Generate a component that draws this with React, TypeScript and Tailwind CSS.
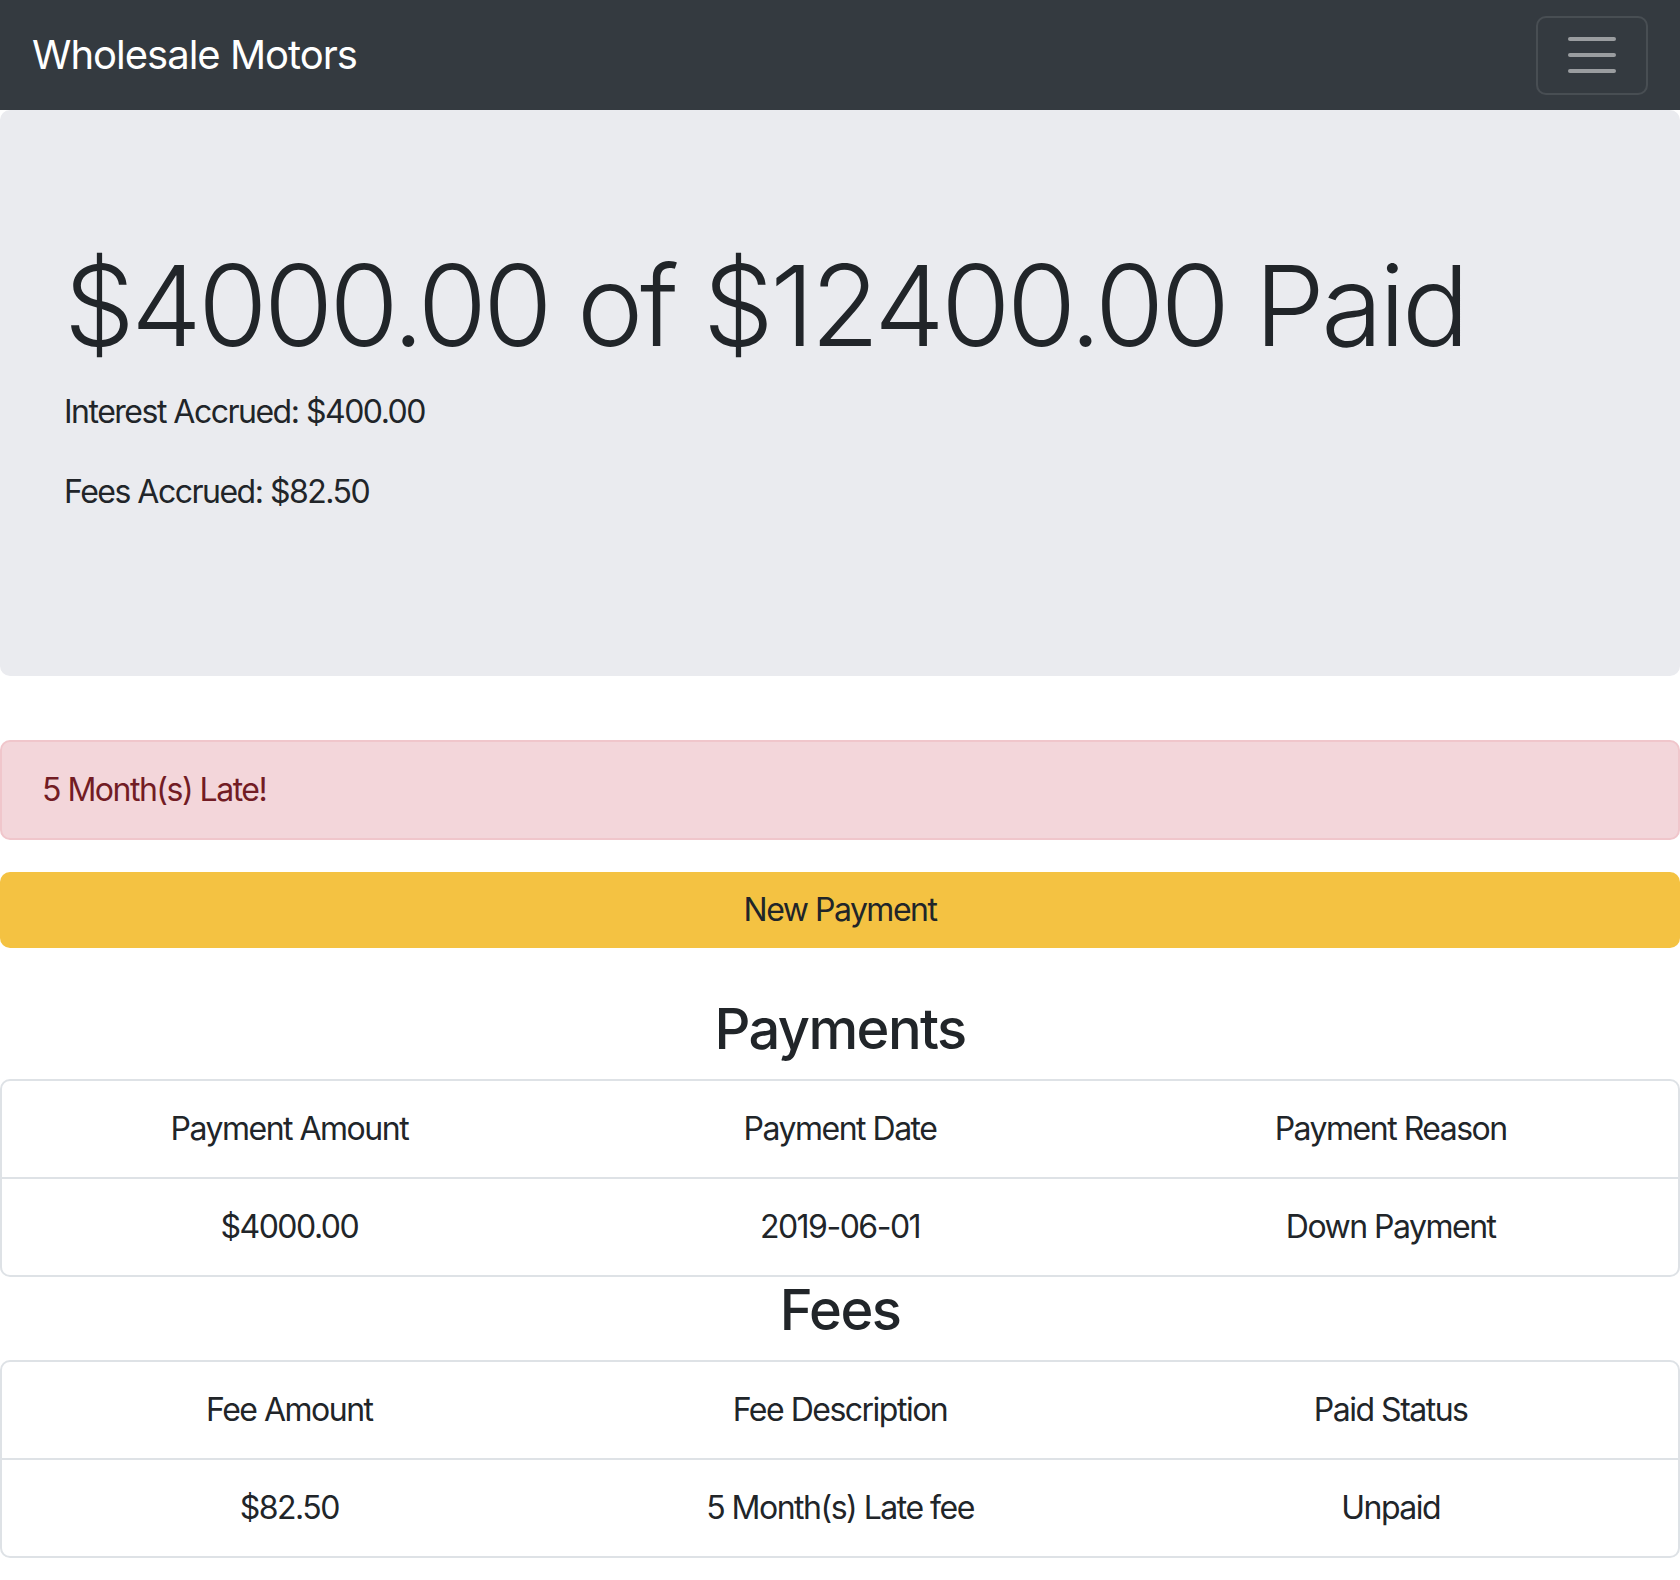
import React from "react";

function Table({ head, row }: { head: string[]; row: string[] }) {
  return (
    <div className="border-2 border-[#dee2e6] rounded-[10px] overflow-hidden">
      <div className="grid grid-cols-[576fr_528fr_576fr] border-b-2 border-[#dee2e6]">
        {head.map((h) => (
          <div key={h} className="py-6 text-center text-[32px] leading-[48px] tracking-[-1.5px]">
            {h}
          </div>
        ))}
      </div>
      <div className="grid grid-cols-[576fr_528fr_576fr]">
        {row.map((h) => (
          <div key={h} className="py-6 text-center text-[32px] leading-[48px] tracking-[-1.5px]">
            {h}
          </div>
        ))}
      </div>
    </div>
  );
}

export default function App() {
  return (
    <div className="w-[1680px] min-h-[1580px] bg-white text-[#212529] font-['Inter',sans-serif]">
      <nav className="h-[110px] bg-[#343a40] flex items-center justify-between px-8">
        <span className="text-[40px] leading-[60px] text-white tracking-[-1px]">Wholesale Motors</span>
        <button className="w-[112px] h-[79px] border-2 border-white/10 rounded-[10px] flex flex-col items-center justify-center gap-3">
          <span className="block w-12 h-1 rounded-full bg-white/50" />
          <span className="block w-12 h-1 rounded-full bg-white/50" />
          <span className="block w-12 h-1 rounded-full bg-white/50" />
        </button>
      </nav>

      <div className="bg-[#eaebef] rounded-[10px] px-16 py-32 mb-16">
        <h1 className="text-[112px] font-light leading-[1.2] mb-4 tracking-[-3.5px]">
          $4000.00 of $12400.00 Paid
        </h1>
        <p className="text-[32px] leading-[48px] mb-8 tracking-[-1.5px]">Interest Accrued: $400.00</p>
        <p className="text-[32px] leading-[48px] mb-8 tracking-[-1.5px]">Fees Accrued: $82.50</p>
      </div>

      <div className="border-2 border-[#f0c6cb] bg-[#f3d6da] text-[#721c24] rounded-[10px] px-10 py-6 text-[32px] leading-[48px] mb-8 tracking-[-1.5px]">
        5 Month(s) Late!
      </div>

      <button className="block w-full h-[76px] bg-[#f4c242] rounded-[10px] text-[32px] leading-[48px] text-[#212529] tracking-[-1.5px]">
        New Payment
      </button>

      <div className="h-12" />

      <h3 className="text-[56px] font-medium leading-[67px] text-center mb-4 tracking-[-1.6px]">Payments</h3>
      <Table
        head={["Payment Amount", "Payment Date", "Payment Reason"]}
        row={["$4000.00", "2019-06-01", "Down Payment"]}
      />
      <h3 className="text-[56px] font-medium leading-[67px] text-center mb-4 tracking-[-1.6px]">Fees</h3>
      <Table
        head={["Fee Amount", "Fee Description", "Paid Status"]}
        row={["$82.50", "5 Month(s) Late fee", "Unpaid"]}
      />
    </div>
  );
}
